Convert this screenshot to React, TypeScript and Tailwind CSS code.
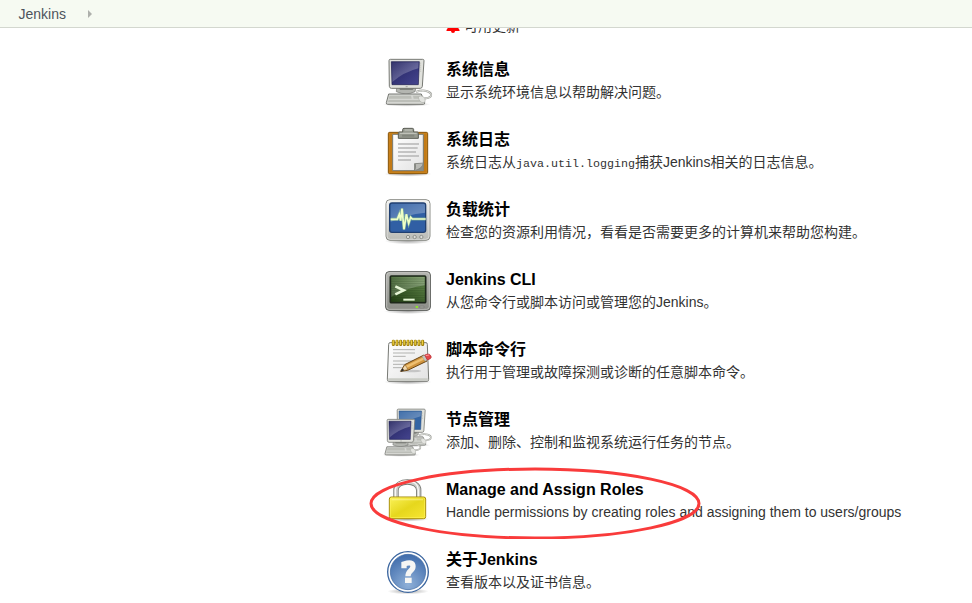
import type { ReactNode } from "react";

type Box = { viewBox: string; children: ReactNode };

function Icon({ viewBox, children }: Box) {
  return (
    <svg className="block h-12 w-12 shrink-0 overflow-visible" viewBox={viewBox}>
      {children}
    </svg>
  );
}

function Defs() {
  return (
    <svg className="absolute h-0 w-0">
      <defs>
        <linearGradient id="screen" x1="0" y1="0" x2="1" y2="1">
          <stop offset="0" stopColor="#22225f" />
          <stop offset="1" stopColor="#45458f" />
        </linearGradient>
        <linearGradient id="gloss" x1="0" y1="0" x2="1" y2="1">
          <stop offset="0" stopColor="#fff" stopOpacity="0.08" />
          <stop offset="1" stopColor="#fff" stopOpacity="0.35" />
        </linearGradient>
        <linearGradient id="paper" x1="0" y1="0" x2="1" y2="1">
          <stop offset="0" stopColor="#ffffff" />
          <stop offset="1" stopColor="#e2e2e2" />
        </linearGradient>
        <linearGradient id="metal" x1="0" y1="0" x2="0" y2="1">
          <stop offset="0" stopColor="#f2f2f0" />
          <stop offset="1" stopColor="#b9bab5" />
        </linearGradient>
        <linearGradient id="casing" x1="0" y1="0" x2="0" y2="1">
          <stop offset="0" stopColor="#b4b5b0" />
          <stop offset="1" stopColor="#8b8d87" />
        </linearGradient>
        <linearGradient id="green" x1="0" y1="1" x2="1" y2="0">
          <stop offset="0" stopColor="#1f3d12" />
          <stop offset="1" stopColor="#688d50" />
        </linearGradient>
        <linearGradient id="gold" x1="0" y1="0" x2="1" y2="1">
          <stop offset="0" stopColor="#fbf35a" />
          <stop offset="0.5" stopColor="#e6d71d" />
          <stop offset="1" stopColor="#f7e634" />
        </linearGradient>
        <radialGradient id="help" cx="0.5" cy="0.85" r="0.8">
          <stop offset="0" stopColor="#8fb0d8" />
          <stop offset="1" stopColor="#4470ae" />
        </radialGradient>
        <radialGradient id="shade">
          <stop offset="0" stopColor="#000" stopOpacity="0.35" />
          <stop offset="1" stopColor="#000" stopOpacity="0" />
        </radialGradient>
      </defs>
    </svg>
  );
}

function Machine({ blue = false }: { blue?: boolean }) {
  return (
    <g>
      <ellipse cx="80" cy="163" rx="72" ry="7" fill="url(#shade)" />
      <path d="M108 126 C134 116 156 126 153 137 C151 146 134 143 123 149" fill="none" stroke="#a0a29c" strokeWidth="6" />
      <path d="M108 126 C134 116 156 126 153 137 C151 146 134 143 123 149" fill="none" stroke="#e6e6e3" strokeWidth="3" />
      <path d="M50 112 H108 L105 125 Q79 138 49 125 Z" fill="#b4b6b1" stroke="#777974" strokeWidth="2" />
      <path d="M57 114 H102 L98 119 H60 Z" fill="#6d6f6a" />
      <path d="M31 28 H128 Q132 28 132 32 L127 109 Q126 115 121 115 H34 Q29 115 28 109 L27 32 Q27 28 31 28 Z" fill="#e1e2dd" stroke="#777974" strokeWidth="3" />
      <path d="M34 35 H118 L115 104 H36 Z" fill={blue ? "#3465a4" : "url(#screen)"} stroke={blue ? "#264d83" : "#1c1c4d"} strokeWidth="2" />
      <path d="M36 37 H116 L115 55 Q72 66 37 96 Z" fill="url(#gloss)" />
      <path d="M122 38 V68" stroke="#aaaca5" strokeWidth="2" strokeDasharray="3 3" />
      <path d="M77 110 h6" stroke="#888a85" strokeWidth="2" />
      <path d="M26 132 H124 L134 158 Q135 163 130 163 H23 Q18 163 19 158 Z" fill="#d5d6d2" stroke="#777974" strokeWidth="3" />
      <path d="M29 137 H93 L95 146 H26 Z M99 137 H119 L123 146 H101 Z M26 150 H126 L128 156 H24 Z" fill="#bcbeb8" />
      <path d="M115 140 Q128 134 134 145 Q139 157 129 158 Q117 157 115 140Z" fill="#e3e4e0" stroke="#a3a59f" strokeWidth="1.5" />
    </g>
  );
}

const Computer = () => (
  <Icon viewBox="12 21 144 144">
    <Machine />
  </Icon>
);

const Clipboard = () => (
  <Icon viewBox="12 21 144 144">
    <ellipse cx="84" cy="162" rx="72" ry="8" fill="url(#shade)" />
    <rect x="25" y="37" width="118" height="124" rx="4" fill="#c27a16" stroke="#835108" strokeWidth="3" />
    <rect x="28" y="40" width="112" height="118" rx="2" fill="none" stroke="#d08b22" strokeWidth="1.5" />
    <path d="M38 43 H130 V152 H38 Z" fill="url(#paper)" stroke="#777a72" strokeWidth="3" />
    <path d="M54 72 H117 M54 84 H113 M54 96 H108 M54 108 H117 M54 120 H93" stroke="#b5b5b5" strokeWidth="5" />
    <path d="M102 152 V130 H130 V152 Z" fill="#8b8d87" />
    <path d="M130 129 Q127 146 103 152 Q109 145 106 131 Z" fill="#b9bab5" stroke="#777974" strokeWidth="2" />
    <path d="M58 36 H68 V29 Q68 25 72 25 H97 Q101 25 101 29 V36 H112 Q115 36 115 40 V55 H55 V40 Q55 36 58 36 Z" fill="#989b91" stroke="#595c54" strokeWidth="3" />
    <path d="M60 40 H110 M74 30 H96" stroke="#c7c9c1" strokeWidth="3" />
    <path d="M66 44 H103 V50 H66Z" fill="#83867d" />
  </Icon>
);

const Monitor = () => (
  <Icon viewBox="12 21 144 144">
    <ellipse cx="84" cy="153" rx="70" ry="10" fill="url(#shade)" />
    <rect x="18" y="29" width="132" height="122" rx="12" fill="url(#metal)" stroke="#8b8d87" strokeWidth="3" />
    <rect x="21" y="32" width="126" height="116" rx="10" fill="none" stroke="#fff" strokeOpacity="0.7" strokeWidth="2" />
    <rect x="29" y="39" width="108" height="88" rx="7" fill="#305fa4" stroke="#203f70" strokeWidth="4" />
    <path d="M32 44 Q32 41 36 41 H131 Q135 41 135 44 V68 Q78 73 32 96 Z" fill="url(#gloss)" />
    <path d="M32 88 H52 L58 73 L62 92 L66 56 L72 118 L79 73 L86 100 L92 82 L97 87 H137" fill="none" stroke="#9fd295" strokeOpacity="0.6" strokeWidth="9" />
    <path d="M32 88 H52 L58 73 L62 92 L66 56 L72 118 L79 73 L86 100 L92 82 L97 87 H137" fill="none" stroke="#efffc6" strokeWidth="5" />
    <g fill="#dededb" stroke="#8f918b" strokeWidth="3">
      <circle cx="84" cy="141" r="5" />
      <circle cx="104" cy="141" r="5" />
      <circle cx="124" cy="141" r="5" />
    </g>
  </Icon>
);

const Terminal = () => (
  <Icon viewBox="12 15 144 144">
    <ellipse cx="84" cy="148" rx="72" ry="8" fill="url(#shade)" />
    <rect x="17" y="29" width="134" height="116" rx="10" fill="url(#casing)" stroke="#555753" strokeWidth="3" />
    <rect x="20" y="32" width="128" height="110" rx="8" fill="none" stroke="#d3d5d0" strokeWidth="2" />
    <rect x="31" y="42" width="106" height="80" rx="3" fill="url(#green)" stroke="#1d281a" strokeWidth="5" />
    <path d="M34 45 H134 V70 Q84 76 34 104 Z" fill="url(#gloss)" />
    <path d="M34 51 H134 M34 58 H134 M34 65 H134 M34 72 H134 M34 79 H134 M34 86 H134 M34 93 H134 M34 100 H134 M34 107 H134 M34 114 H134" stroke="#132b0c" strokeOpacity="0.25" strokeWidth="2" />
    <path d="M46 73 L71 85 L46 97" fill="none" stroke="#e5f5d5" strokeWidth="8" />
    <path d="M70 113 H104" stroke="#e5f5d5" strokeWidth="6" />
    <path d="M107 135 H114" stroke="#8be22c" strokeWidth="6" />
    <path d="M119 132 H132 V138 H119 Z" fill="#9b9d97" stroke="#747671" strokeWidth="1.5" />
  </Icon>
);

const Notepad = () => (
  <Icon viewBox="12 15 144 144">
    <ellipse cx="84" cy="150" rx="72" ry="8" fill="url(#shade)" />
    <path d="M30 32 H138 Q142 32 142 37 L146 142 Q146 148 141 148 H27 Q22 148 22 142 L26 37 Q26 32 30 32 Z" fill="url(#paper)" stroke="#777974" strokeWidth="3" />
    <path d="M25 139 H143 L144 146 H24 Z" fill="#c9cbc5" />
    <path d="M39 53 H105 M39 63 H105 M39 73 H77 M39 87 H112 M39 97 H92 M39 107 H65" stroke="#a4a5a1" strokeWidth="2.5" />
    {[40, 51, 62, 73, 84, 95, 106, 117, 128].map((x) => (
      <g key={x}>
        <rect x={x - 4.5} y="23" width="9" height="19" rx="4" fill="#9c7c04" />
        <path d={`M${x - 0.5} 25 V38`} stroke="#edd040" strokeWidth="4" />
      </g>
    ))}
    <ellipse cx="91" cy="117" rx="33" ry="4" fill="#000" opacity="0.16" />
    <path d="M62 118 L74 98 L132 69 L141 87 L83 115 Z" fill="#d0953f" stroke="#6d4612" strokeWidth="3" />
    <path d="M77 101 L134 74 L137 80 L81 108 Z" fill="#efc071" />
    <path d="M64 117 L74 99 L80 105 L83 113 Z" fill="#f2dab2" stroke="#785019" strokeWidth="1.5" />
    <path d="M62 119 L67 109 L73 115 Z" fill="#292929" />
    <path d="M126 73 L134 69 L143 84 L135 88 Z" fill="#c3c6bf" stroke="#868980" strokeWidth="1" />
    <path d="M134 69 L143 66 Q149 65 153 72 Q155 77 151 80 L142 84 Z" fill="#e3474a" stroke="#b42b30" strokeWidth="2" />
    <path d="M137 71 L147 69" stroke="#ff9899" strokeWidth="3" />
  </Icon>
);

const Nodes = () => (
  <Icon viewBox="12 15 144 144">
    <g transform="translate(30 -1) scale(.8)">
      <Machine blue />
    </g>
    <g transform="translate(0 30) scale(.79)">
      <Machine />
    </g>
  </Icon>
);

const Lock = () => (
  <Icon viewBox="57 45 144 144">
    <ellipse cx="127" cy="171" rx="65" ry="8" fill="url(#shade)" />
    <path d="M93 111 V84 C93 52 161 52 161 84 V111" fill="none" stroke="#777974" strokeWidth="16" />
    <path d="M93 109 V84 C93 52 161 52 161 84 V109" fill="none" stroke="#cccdc9" strokeWidth="11" />
    <path d="M91 108 V83 C93 60 110 57 127 57 C150 57 160 69 160 84 V108" fill="none" stroke="#f8f8f6" strokeWidth="4" />
    <rect x="73" y="105" width="109" height="65" rx="6" fill="url(#gold)" stroke="#a38908" strokeWidth="3" />
    <rect x="76" y="108" width="103" height="59" rx="3" fill="none" stroke="#fff45d" strokeWidth="2" />
    <path d="M80 113 H174" stroke="#fff9a4" strokeOpacity="0.5" strokeWidth="4" />
  </Icon>
);

const Help = () => (
  <Icon viewBox="12 15 144 144">
    <ellipse cx="84" cy="148" rx="62" ry="9" fill="url(#shade)" />
    <circle cx="84" cy="90" r="61" fill="#fff" stroke="#3a659f" strokeWidth="4" />
    <circle cx="84" cy="90" r="53" fill="url(#help)" stroke="#3a659f" strokeWidth="2" />
    <path d="M72 79 V66 Q99 57 99 73 Q99 81 91 87 Q84 93 84 103" fill="none" stroke="#f6f6f4" strokeWidth="16" />
    <path d="M75 107 H95 V123 H75 Z" fill="#f6f6f4" />
  </Icon>
);

type Item = { title: string; text: ReactNode; icon: () => ReactNode };

const items: Item[] = [
  { title: "系统信息", text: "显示系统环境信息以帮助解决问题。", icon: Computer },
  {
    title: "系统日志",
    text: (
      <>
        系统日志从
        <code className="font-['Liberation_Mono',monospace] text-[11.66px] leading-none">java.util.logging</code>
        捕获Jenkins相关的日志信息。
      </>
    ),
    icon: Clipboard,
  },
  { title: "负载统计", text: "检查您的资源利用情况，看看是否需要更多的计算机来帮助您构建。", icon: Monitor },
  { title: "Jenkins CLI", text: "从您命令行或脚本访问或管理您的Jenkins。", icon: Terminal },
  { title: "脚本命令行", text: "执行用于管理或故障探测或诊断的任意脚本命令。", icon: Notepad },
  { title: "节点管理", text: "添加、删除、控制和监视系统运行任务的节点。", icon: Nodes },
  {
    title: "Manage and Assign Roles",
    text: "Handle permissions by creating roles and assigning them to users/groups",
    icon: Lock,
  },
  { title: "关于Jenkins", text: "查看版本以及证书信息。", icon: Help },
];

export default function App() {
  return (
    <div className="relative flex h-[603px] w-[972px] flex-col overflow-hidden bg-white font-['Liberation_Sans','Noto_Sans_CJK_SC',sans-serif] text-sm text-[#333333]">
      <Defs />
      <header className="flex h-7 shrink-0 items-center border-b border-[#d3d7cf] bg-[#f6faf2] pl-[18.5px] text-[#4d545d]">
        <span className="pt-px">Jenkins</span>
        <svg className="ml-[22px] mt-px h-[8px] w-[4px]" viewBox="0 0 4 8">
          <path d="M0 0 L4 4 L0 8 Z" fill="#aeb0ac" />
        </svg>
      </header>
      <main className="min-h-0 flex-1 overflow-hidden pl-96">
        <div className="-mt-3 flex h-[41px] items-start pl-[62px]">
          <svg className="mt-[2px] h-[15px] w-[14px]" viewBox="0 0 14 15">
            <path d="M7 0 C10 0 11 3 11 8 L13.5 12 V13 H.5 V12 L3 8 C3 3 4 0 7 0 M5 13 H9 Q9 15 7 15 Q5 15 5 13" fill="#ff0000" />
          </svg>
          <span className="ml-1 leading-[20px]">可用更新</span>
        </div>
        {items.map(({ title, text, icon: Glyph }) => (
          <section key={title} className="flex h-[70px] items-start gap-[14px]">
            <Glyph />
            <div className="pt-px whitespace-nowrap">
              <h2 className="h-[23px] text-base leading-[24px] font-bold text-black">{title}</h2>
              <p className="h-[23px] leading-[23px]">{text}</p>
            </div>
          </section>
        ))}
      </main>
      <svg className="pointer-events-none absolute top-[467px] left-[369px] h-[72px] w-[332px]" viewBox="0 0 332 72">
        <ellipse cx="166" cy="36.5" rx="164" ry="34.5" fill="none" stroke="#f93b3b" strokeWidth="3" />
      </svg>
    </div>
  );
}
